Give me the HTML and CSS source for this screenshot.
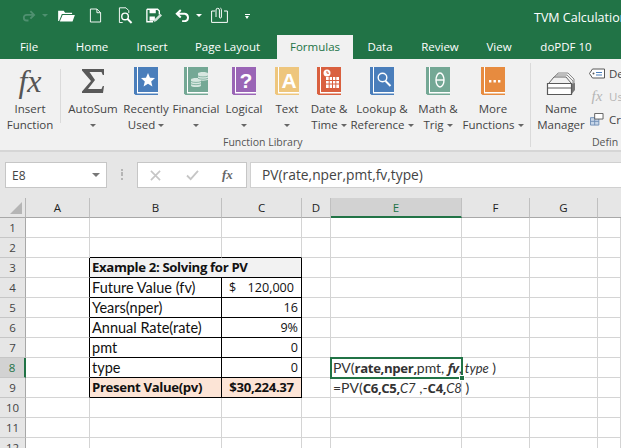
FILE: index.html
```html
<!DOCTYPE html>
<html lang="en">
<head>
<meta charset="utf-8">
<title>TVM Calculations</title>
<link rel="stylesheet" href="styles.css">
</head>
<body>
<div class="app">
  <header class="titlebar">
    <div class="qat">
      <svg class="q q-redo" viewBox="0 0 24 20"><path d="M21 9H9a4.500 4.500 0 0 0 0 9h3M15 3l6 6-6 6" fill="none" stroke="#4f9070" stroke-width="3"/></svg>
      <span class="caret dim"></span>
      <svg class="q q-open" viewBox="0 0 18 14"><path d="M0 13V2h6l1.500 2H15v1.500H4L1 13zM4.800 6.500H18l-2.500 7H1.800z" fill="#fff"/></svg>
      <svg class="q q-new" viewBox="0 0 14 16"><path d="M1.500 1h7l4 4v10h-11zM8.500 1v4h4" fill="none" stroke="#fff"/></svg>
      <svg class="q q-prev" viewBox="0 0 16 18"><path d="M5 16.500H1.500V.8h7l3 3v2.500" fill="none" stroke="#fff"/><circle cx="7.500" cy="10" r="3.500" fill="none" stroke="#fff" stroke-width="1.500"/><path d="M10 12.500l4.500 4.500" stroke="#fff" stroke-width="2"/></svg>
      <svg class="q q-save" viewBox="0 0 18 16"><path d="M1 1h12l2 2v4M8 15H1V1" fill="none" stroke="#fff" stroke-width="1.500"/><path d="M4 1.500h7v4H4zM4 9h6v5H4z" fill="#fff"/><path d="M9 15.500l1-3.500 6-6 2 2-6 6z" fill="#cfe2d8"/></svg>
      <svg class="q q-undo" viewBox="0 0 18 14"><path d="M2 5h9a4.300 4.300 0 0 1 0 8.500H8M6.500 .8L2 5l4.500 4.200" fill="none" stroke="#fff" stroke-width="2.200"/></svg>
      <span class="caret"></span>
      <svg class="q q-clip" viewBox="0 0 17 16"><path d="M4 4H.6v11.400h15.800V4H13" fill="none" stroke="#fff"/><path d="M5 10V3a1.700 1.700 0 0 1 3.400 0v7a1 1 0 0 0 2 0V2.500a1.500 1.500 0 0 0-1-1.400" fill="none" stroke="#fff"/></svg>
      <span class="more-caret"></span>
    </div>
    <div class="doc-title">TVM Calculation</div>
  </header>

  <nav class="tabs">
    <span class="tab w-file">File</span>
    <span class="tab w-home">Home</span>
    <span class="tab w-insert">Insert</span>
    <span class="tab w-layout">Page Layout</span>
    <span class="tab active">Formulas</span>
    <span class="tab w-data">Data</span>
    <span class="tab w-review">Review</span>
    <span class="tab w-view">View</span>
    <span class="tab w-dopdf">doPDF 10</span>
  </nav>

  <section class="ribbon">
    <div class="rb w-fx">
      <span class="fx-big">fx</span>
      <span class="lbl">Insert<br>Function</span>
    </div>
    <div class="sep sep-a"></div>
    <div class="rb w-sum">
      <svg class="ico" viewBox="0 0 24 28"><path d="M1 2h22v6h-1.200l-1.300-3H8.500L14 13l-7 9h13.500l1.300-3H23l-1 7H1v-1.500L10 14 1 3.500z" fill="#595959"/></svg>
      <span class="lbl">AutoSum<br><i class="caret-d"></i></span>
    </div>
    <div class="rb w-rec">
      <svg class="ico" viewBox="0 0 24 28"><path d="M0 0h24v28H1.500L0 26.500z" fill="#4a7ebb"/><path d="M3 0h1v25h20v1.500H3z" fill="#fff"/><path d="M14 6l2 4.700 5 .4-3.800 3.300 1.200 5-4.400-2.700-4.400 2.700 1.200-5L7 11.100l5-.4z" fill="#fff"/></svg>
      <span class="lbl">Recently<br>Used <i class="caret-d"></i></span>
    </div>
    <div class="rb w-fin">
      <svg class="ico" viewBox="0 0 24 28"><path d="M0 0h24v28H1.500L0 26.500z" fill="#74a895"/><path d="M3 0h1v25h20v1.500H3z" fill="#fff"/><path d="M14 6.500c0-2 10-2 10 0v6c0 1.500-10 1.500-10 0zM7 12.500c0-2 10-2 10 0v6c0 2-10 2-10 0z" fill="#d7e7e0"/><path d="M14 9c2 1.200 8 1.200 10 0M14 11.300c2 1.200 8 1.200 10 0M7 14.500c2 1.200 8 1.200 10 0M7 16.800c2 1.200 8 1.200 10 0" stroke="#74a895" stroke-width=".8" fill="none"/></svg>
      <span class="lbl">Financial<br><i class="caret-d"></i></span>
    </div>
    <div class="rb w-log">
      <svg class="ico" viewBox="0 0 24 28"><path d="M0 0h24v28H1.500L0 26.500z" fill="#9a65b6"/><path d="M3 0h1v25h20v1.500H3z" fill="#fff"/><text x="14" y="21" class="glyph">?</text></svg>
      <span class="lbl">Logical<br><i class="caret-d"></i></span>
    </div>
    <div class="rb w-txt">
      <svg class="ico" viewBox="0 0 24 28"><path d="M0 0h24v28H1.500L0 26.500z" fill="#eec67d"/><path d="M3 0h1v25h20v1.500H3z" fill="#fff"/><text x="14" y="21" class="glyph">A</text></svg>
      <span class="lbl">Text<br><i class="caret-d"></i></span>
    </div>
    <div class="rb w-date">
      <svg class="ico" viewBox="0 0 24 28"><path d="M0 0h24v28H1.500L0 26.500z" fill="#d9603f"/><path d="M3 0h1v25h20v1.500H3z" fill="#fff"/><circle cx="10" cy="6" r="3.500" fill="#fff"/><path d="M10 4v2.200h2" stroke="#d9603f" fill="none"/><path d="M9 10h13v11H9z" fill="#fff"/><path d="M9 13.500h13M9 17h13M12.200 10v11M15.500 10v11M18.800 10v11" stroke="#d9603f"/></svg>
      <span class="lbl">Date &amp;<br>Time <i class="caret-d"></i></span>
    </div>
    <div class="rb w-look">
      <svg class="ico" viewBox="0 0 24 28"><path d="M0 0h24v28H1.500L0 26.500z" fill="#4a7ebb"/><path d="M3 0h1v25h20v1.500H3z" fill="#fff"/><circle cx="12.500" cy="10.500" r="4.300" fill="none" stroke="#fff" stroke-width="1.400"/><path d="M15.500 14l5 5" stroke="#fff" stroke-width="2"/></svg>
      <span class="lbl">Lookup &amp;<br>Reference <i class="caret-d"></i></span>
    </div>
    <div class="rb w-math">
      <svg class="ico" viewBox="0 0 24 28"><path d="M0 0h24v28H1.500L0 26.500z" fill="#74a895"/><path d="M3 0h1v25h20v1.500H3z" fill="#fff"/><ellipse cx="14" cy="13" rx="4" ry="7" fill="none" stroke="#fff" stroke-width="1.400"/><path d="M10 13h8" stroke="#fff" stroke-width="1.400"/></svg>
      <span class="lbl">Math &amp;<br>Trig <i class="caret-d"></i></span>
    </div>
    <div class="rb w-more">
      <svg class="ico" viewBox="0 0 24 28"><path d="M0 0h24v28H1.500L0 26.500z" fill="#e78b3f"/><path d="M3 0h1v25h20v1.500H3z" fill="#fff"/><path d="M8 13h2.400v2.400H8zM12.500 13h2.400v2.400h-2.400zM17 13h2.400v2.400H17z" fill="#fff"/></svg>
      <span class="lbl">More<br>Functions <i class="caret-d"></i></span>
    </div>
    <div class="sep sep-b"></div>
    <div class="rb w-name">
      <svg class="ico ico-name" viewBox="0 0 30 24"><path d="M8 6l4-5h10l6 6v9l-3 3" fill="none" stroke="#8a8a8a"/><path d="M6 8l4-5h11l6 6v8" fill="#f1f1f1" stroke="#8a8a8a"/><path d="M3 11l5-6h12l5 6" fill="#f1f1f1" stroke="#666"/><path d="M25 12l4-1v7l-4 5z" fill="#777"/><path d="M1.500 11.500h24v11h-24z" fill="#fff" stroke="#595959" stroke-width="1.200"/><path d="M1.500 16h24" stroke="#595959"/></svg>
      <span class="lbl">Name<br>Manager</span>
    </div>
    <div class="names">
      <div class="nrow"><svg viewBox="0 0 16 10" class="nico"><path d="M3.500 .5h12v9h-12L.5 5z" fill="#fff" stroke="#595959"/><circle cx="4.500" cy="5" r="1" fill="#595959"/><path d="M7 4h6M7 6.500h6" stroke="#4a7ebb"/></svg><span>De</span></div>
      <div class="nrow off"><span class="nfx">fx</span><span>Us</span></div>
      <div class="nrow"><svg viewBox="0 0 16 14" class="nico"><path d="M1 5h9v8H1z" fill="#c7d6e8" stroke="#6f8fb5"/><path d="M1 9h9M5.500 5v8" stroke="#6f8fb5"/><path d="M5.500 .5h9v6h-9z" fill="#fff" stroke="#595959"/></svg><span>Cr</span></div>
    </div>
    <div class="group-lbl gl-lib">Function Library</div>
    <div class="group-lbl gl-def">Defin</div>
  </section>

  <section class="fbar">
    <div class="namebox"><span>E8</span><span class="nb-caret"></span></div>
    <div class="grip"></div>
    <div class="fbtns">
      <svg class="fb-x" viewBox="0 0 12 12"><path d="M1 1l10 10M11 1L1 11" stroke="#c6c6c6" stroke-width="1.800"/></svg>
      <svg class="fb-c" viewBox="0 0 14 12"><path d="M1 6l4 4 8-9" fill="none" stroke="#c6c6c6" stroke-width="2"/></svg>
      <span class="fb-fx">fx</span>
    </div>
    <div class="finput">PV(rate,nper,pmt,fv,type)</div>
  </section>

  <section class="sheet">
    <div class="hd corner"><span class="tri"></span></div>
    <div class="hd col">A</div><div class="hd col">B</div><div class="hd col">C</div><div class="hd col">D</div><div class="hd col sel-col">E</div><div class="hd col">F</div><div class="hd col">G</div><div class="hd col end"></div>

    <div class="hd row">1</div><div class="c"></div><div class="c"></div><div class="c"></div><div class="c"></div><div class="c"></div><div class="c"></div><div class="c"></div><div class="c"></div>
    <div class="hd row">2</div><div class="c"></div><div class="c b-b"></div><div class="c b-b"></div><div class="c"></div><div class="c"></div><div class="c"></div><div class="c"></div><div class="c"></div>

    <div class="hd row">3</div><div class="c b-r"></div><div class="c t b title-row span2">Example 2: Solving for PV</div><div class="c"></div><div class="c"></div><div class="c"></div><div class="c"></div><div class="c"></div>
    <div class="hd row">4</div><div class="c b-r"></div><div class="c t">Future Value (fv)</div><div class="c t num-f money"><span>$</span><span>120,000</span></div><div class="c"></div><div class="c"></div><div class="c"></div><div class="c"></div><div class="c"></div>
    <div class="hd row">5</div><div class="c b-r"></div><div class="c t">Years(nper)</div><div class="c t num-f num">16</div><div class="c"></div><div class="c"></div><div class="c"></div><div class="c"></div><div class="c"></div>
    <div class="hd row">6</div><div class="c b-r"></div><div class="c t">Annual Rate(rate)</div><div class="c t num-f num">9%</div><div class="c"></div><div class="c"></div><div class="c"></div><div class="c"></div><div class="c"></div>
    <div class="hd row">7</div><div class="c b-r"></div><div class="c t">pmt</div><div class="c t num-f num">0</div><div class="c"></div><div class="c"></div><div class="c"></div><div class="c"></div><div class="c"></div>
    <div class="hd row sel-row">8</div><div class="c b-r"></div><div class="c t">type</div><div class="c t num-f num">0</div><div class="c"></div><div class="c selected"><span class="over">PV(<b>rate,nper,</b>pmt, <b><i>fv</i></b>,<i> type</i> )</span><i class="handle"></i></div><div class="c"></div><div class="c"></div><div class="c"></div>
    <div class="hd row">9</div><div class="c b-r"></div><div class="c t b peach">Present Value(pv)</div><div class="c t b peach mid">$30,224.37</div><div class="c"></div><div class="c"><span class="over">=PV(<b>C6,C5,</b><i>C7</i> ,-<b>C4,</b><i>C8</i> )</span></div><div class="c"></div><div class="c"></div><div class="c"></div>

    <div class="hd row">10</div><div class="c"></div><div class="c"></div><div class="c"></div><div class="c"></div><div class="c"></div><div class="c"></div><div class="c"></div><div class="c"></div>
    <div class="hd row">11</div><div class="c"></div><div class="c"></div><div class="c"></div><div class="c"></div><div class="c"></div><div class="c"></div><div class="c"></div><div class="c"></div>
    <div class="hd row">12</div><div class="c"></div><div class="c"></div><div class="c"></div><div class="c"></div><div class="c"></div><div class="c"></div><div class="c"></div><div class="c"></div>
  </section>
</div>
</body>
</html>
```
FILE: styles.css
```css
* { box-sizing: border-box; }
html, body { margin: 0; padding: 0; }
body { width: 621px; height: 448px; overflow: hidden; font-family: "Open Sans", "Noto Sans", sans-serif; background: #fff; }
.app { width: 621px; height: 448px; display: flex; flex-direction: column; overflow: hidden; }

/* title bar */
.titlebar { height: 35px; background: #217346; display: flex; color: #fff; flex: none; }
.qat { display: flex; align-items: center; height: 30px; padding-left: 21px; width: 534px; flex: none; position: relative; }
.q { display: block; flex: none; }
.q-redo { width: 15px; height: 13px; }
.caret { width: 0; height: 0; border: 3px solid transparent; border-top: 3px solid #fff; border-bottom: 0; flex: none; }
.caret.dim { border-top-color: #4f9070; margin-left: 6px; }
.q-open { width: 17px; height: 13px; margin-left: 10px; }
.q-new { width: 13px; height: 15px; margin-left: 14px; }
.q-prev { width: 15px; height: 17px; margin-left: 16px; }
.q-save { width: 16px; height: 15px; margin-left: 13px; }
.q-undo { width: 16px; height: 13px; margin-left: 13px; }
.q-undo + .caret { margin-right: 6px; margin-left: 5px; }
.q-clip { width: 17px; height: 16px; margin-left: 3px; }
.more-caret { width: 5px; height: 5px; margin-left: 17px; margin-top: 3px; border-top: 1px solid #fff; position: relative; }
.more-caret::after { content: ""; display: block; margin-top: 1px; width: 0; height: 0; border: 2.500px solid transparent; border-top: 3px solid #fff; border-bottom: 0; }
.doc-title { font-size: 12.500px; line-height: 35px; white-space: nowrap; }

/* tabs */
.tabs { height: 24px; background: #217346; display: flex; flex: none; }
.tab { font-size: 11.500px; line-height: 24px; color: #fff; text-align: center; flex: none; white-space: nowrap; }
.tab.active { width: 76px; background: #f1f1f1; color: #217346; }
.w-file { width: 58px; } .w-home { width: 68px; } .w-insert { width: 52px; } .w-layout { width: 99px; }
.w-data { width: 54px; } .w-review { width: 66px; } .w-view { width: 52px; } .w-dopdf { width: 82px; }

/* ribbon */
.ribbon { height: 93px; background: #f1f1f1; border-bottom: 2px solid #d6d6d6; display: flex; position: relative; flex: none; overflow: hidden; }
.rb { display: flex; flex-direction: column; align-items: center; padding-top: 8px; flex: none; }
.ico { width: 24px; height: 28px; display: block; margin-bottom: 6px; flex: none; }
.ico-name { width: 30px; height: 24px; margin-top: 5px; margin-bottom: 5px; }
.glyph { font-family: "Liberation Sans", sans-serif; font-weight: 700; font-size: 21px; fill: #fff; text-anchor: middle; }
.lbl { font-size: 11.500px; line-height: 16px; text-align: center; color: #444; white-space: nowrap; }
.caret-d { display: inline-block; width: 0; height: 0; border: 3px solid transparent; border-top: 3px solid #666; border-bottom: 0; vertical-align: middle; }
.w-fx { width: 60px; }
.fx-big { font-family: "Liberation Serif", serif; font-style: italic; font-size: 32px; line-height: 28px; height: 28px; margin-bottom: 6px; color: #555; }
.sep { width: 1px; background: #dadada; flex: none; }
.sep-a { height: 54px; margin-top: 10px; margin-right: 6px; }
.sep-b { height: 84px; margin-top: 4px; margin-left: 9px; margin-right: 2px; }
.w-sum { width: 52px; } .w-rec { width: 54px; } .w-fin { width: 46px; } .w-log { width: 50px; } .w-txt { width: 36px; }
.w-date { width: 48px; } .w-look { width: 58px; } .w-math { width: 54px; } .w-more { width: 56px; } .w-name { width: 56px; }
.names { display: flex; flex-direction: column; gap: 4px; padding-top: 5px; font-size: 11.500px; color: #444; flex: none; }
.nrow { height: 19px; display: flex; align-items: center; gap: 4px; white-space: nowrap; }
.nrow.off { color: #b5b5b5; }
.nico { width: 16px; height: 13px; flex: none; }
.nfx { font-family: "Liberation Serif", serif; font-style: italic; font-size: 15px; width: 16px; text-align: center; }
.group-lbl { position: absolute; top: 76px; font-size: 10.500px; line-height: 15px; color: #555; white-space: nowrap; }
.gl-lib { left: 223px; }
.gl-def { left: 592px; }

/* formula bar */
.fbar { height: 46px; background: #e6e6e6; display: flex; align-items: flex-start; padding-top: 10px; flex: none; }
.namebox { width: 102px; height: 26px; margin-left: 5px; background: #fff; border: 1px solid #c6c6c6; display: flex; align-items: center; justify-content: space-between; padding: 0 6px; font-size: 12px; color: #444; flex: none; }
.nb-caret { width: 0; height: 0; border: 4px solid transparent; border-top: 4px solid #777; border-bottom: 0; }
.grip { width: 2px; height: 11px; margin: 7px 14px 0 14px; flex: none; border-top: 2px solid #b5b5b5; border-bottom: 2px solid #b5b5b5; background: linear-gradient(#e6e6e6 1.500px, #b5b5b5 1.500px, #b5b5b5 5.500px, #e6e6e6 5.500px); }
.fbtns { width: 110px; height: 26px; background: #fff; border: 1px solid #c6c6c6; display: flex; align-items: center; flex: none; }
.fb-x { width: 11px; height: 11px; margin-left: 12px; }
.fb-c { width: 13px; height: 11px; margin-left: 25px; }
.fb-fx { font-family: "Liberation Serif", serif; font-style: italic; font-weight: bold; font-size: 13px; color: #666; margin-left: 23px; }
.finput { flex: 1; height: 26px; margin-left: 3px; background: #fff; border: 1px solid #d0d0d0; border-right: 0; font-size: 13.800px; line-height: 24px; padding-left: 11px; color: #444; }

/* sheet */
.sheet { flex: 1; display: grid; grid-template-columns: 26px 64px 132px 80px 29px 131px 68px 68px 23px; grid-template-rows: 20px repeat(12, 20px); background: #fff; min-height: 0; overflow: hidden; }
.hd { background: #e6e6e6; font-size: 11.500px; color: #333; display: flex; align-items: center; justify-content: center; }
.corner { border-right: 1px solid #b5b5b5; border-bottom: 1px solid #a8a8a8; justify-content: flex-end; align-items: flex-end; padding: 0 3px 3px 0; }
.tri { width: 0; height: 0; border-left: 12px solid transparent; border-bottom: 12px solid #b5b5b5; }
.col { border-right: 1px solid #c0c0c0; border-bottom: 1px solid #a8a8a8; color: #222; }
.col.end { border-right: 0; }
.col.sel-col { background: #d2d2d2; color: #217346; border-bottom: 2px solid #217346; }
.row { border-right: 1px solid #a8a8a8; border-bottom: 1px solid #c6c6c6; color: #444; }
.row.sel-row { background: #d2d2d2; color: #217346; border-right: 2px solid #217346; }
.c { border-right: 1px solid #d4d4d4; border-bottom: 1px solid #d4d4d4; font-family: "Lato", sans-serif; font-size: 14.500px; line-height: 19px; color: #111; white-space: nowrap; position: relative; }
.b-r { border-right-color: #000; }
.b-b { border-bottom-color: #000; }
.t { border-right: 1px solid #000; border-bottom: 1px solid #000; padding: 0 3px 0 2px; }
.b, .over b { font-family: "Open Sans", sans-serif; font-weight: 700; font-size: 13.200px; letter-spacing: -.35px; }
.num-f { font-family: "Open Sans", sans-serif; font-size: 12.600px; }
.span2 { grid-column: span 2; }
.title-row { background: #f2f2f2; }
.peach { background: #fce4d6; }
.num { text-align: right; }
.mid { text-align: center; padding: 0; }
.money { display: flex; justify-content: space-between; padding: 0 7px 0 7px; }
.selected { outline: 2px solid #217346; outline-offset: -1px; z-index: 2; }
.handle { position: absolute; right: -4px; bottom: -4px; background: #217346; border: 1px solid #fff; box-sizing: content-box; width: 4px; height: 4px; }
.over { position: absolute; left: 2px; top: 0; font-size: 14px; line-height: 19px; color: #333; z-index: 3; }
.over i { font-size: 13px; }
```
